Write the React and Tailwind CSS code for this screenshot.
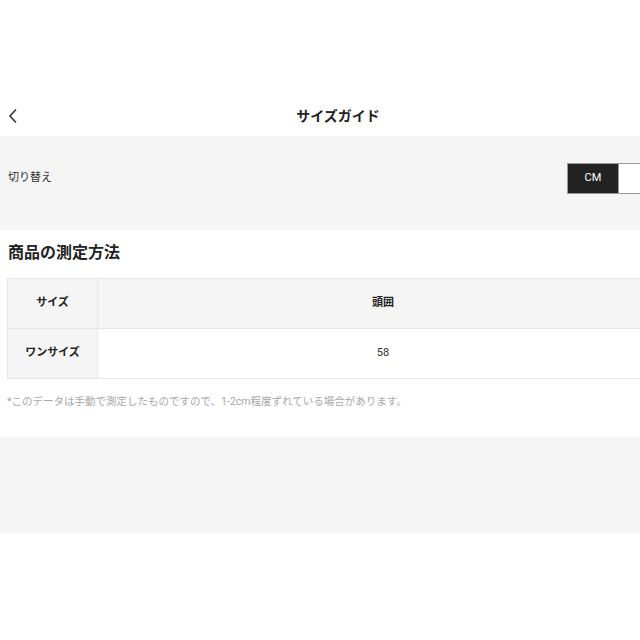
import React from "react";

function App() {
  return (
    <div className="w-[640px] h-[640px] bg-white overflow-hidden">
      <div
        className="w-[676px] text-[#222]"
        style={{ fontFamily: 'Roboto, "Noto Sans CJK JP", sans-serif' }}
      >
        <div className="h-[96px]" />
        {/* header */}
        <div className="relative h-[40px] flex items-center justify-center">
          <svg
            className="absolute left-[7px] top-[12px]"
            width="12"
            height="16"
            viewBox="0 0 12 16"
            fill="none"
            stroke="#333"
            strokeWidth="1.6"
          >
            <path d="M9 1.5 L3 8 L9 14.5" />
          </svg>
          <p className="text-[14px] font-bold">サイズガイド</p>
        </div>

        {/* unit toggle */}
        <div className="bg-[#f5f5f5] h-[94px] flex items-center justify-between pl-[8px] pr-[8px] pb-[10px]">
          <p className="text-[11px] text-[#333]">切り替え</p>
          <div className="flex">
            <div className="w-[52px] h-[31px] bg-[#222] text-white text-[11px] flex items-center justify-center border border-[#999]">
              CM
            </div>
            <div className="w-[49px] h-[31px] bg-white border border-[#999] border-l-0" />
          </div>
        </div>

        {/* measurement */}
        <div className="h-[207px] pt-[12px]">
          <p className="text-[16px] font-bold pl-[8px] leading-[22px]">商品の測定方法</p>
          <div className="mx-[7px] mt-[14px] border border-[#e6e6e6]">
            <div className="flex h-[50px] bg-[#f5f5f5] border-b border-[#e6e6e6]">
              <div className="w-[90px] border-r border-[#e6e6e6] flex items-center justify-center text-[11px] font-bold">
                サイズ
              </div>
              <div className="flex-1 flex items-center justify-center text-[11px] font-bold">
                頭囲
              </div>
            </div>
            <div className="flex h-[49px]">
              <div className="w-[90px] bg-[#f5f5f5] border-r border-[#e6e6e6] flex items-center justify-center text-[11px] font-bold">
                ワンサイズ
              </div>
              <div className="flex-1 flex items-center justify-center text-[11px] text-[#333] bg-white">
                58
              </div>
            </div>
          </div>
          <p className="text-[10.5px] text-[#a8a8a8] pl-[7px] mt-[15px]">
            *このデータは手動で測定したものですので、1-2cm程度ずれている場合があります。
          </p>
        </div>

        <div className="bg-[#f5f5f5] h-[96px]" />
      </div>
    </div>
  );
}

export default App;
